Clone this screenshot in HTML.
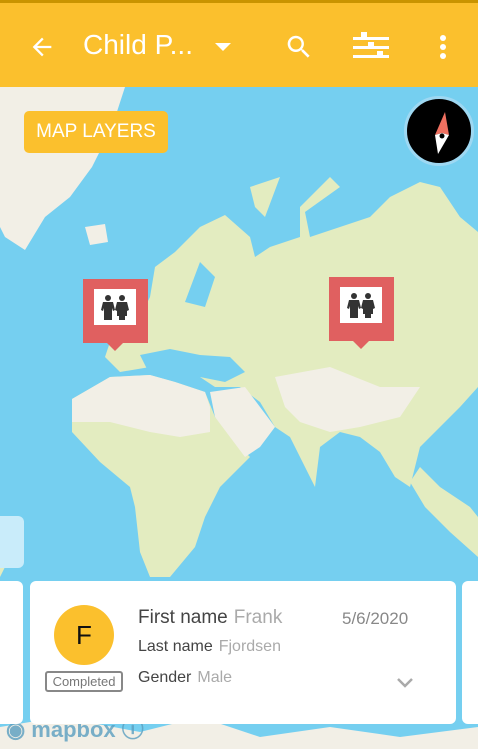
<!DOCTYPE html>
<html><head><style>
*{margin:0;padding:0;box-sizing:border-box}
body{width:478px;height:749px;overflow:hidden;position:relative;font-family:"Liberation Sans",sans-serif;background:#75cff0}
.top{position:absolute;left:0;top:0;width:478px;height:87px;background:#fbc02d;border-top:3px solid #c99400}
.title{position:absolute;left:83px;top:26px;color:#fff;font-size:28px}
.ml{position:absolute;left:24px;top:111px;width:144px;height:42px;background:#fbc02d;border-radius:5px;color:#fff;font-size:19px;line-height:42px;text-align:center}
.comp{position:absolute;left:404px;top:96px;width:70px;height:70px;border-radius:50%;background:#000;border:3px solid #9ed8f2}
.mk{position:absolute;width:65px;height:64px;background:#e06060}
.mk .in{position:absolute;left:11px;top:10px;width:42px;height:36px;background:#fff}
.mk:after{content:"";position:absolute;left:24px;bottom:-8px;border-left:8px solid transparent;border-right:8px solid transparent;border-top:8px solid #e06060}
.card{position:absolute;top:581px;height:143px;background:#fff;border-radius:6px}
.lbl{position:absolute;color:#444;font-size:18px}
.lbl span{color:#aaa;margin-left:6px}
</style></head><body>
<svg style="position:absolute;left:0;top:87px" width="478" height="662">
<path fill="#f2efe6" d="M0 0H125L112 40 92 80 70 110 45 130 25 163 5 150 0 140Z"/>
<path fill="#e3ecc0" d="M155 180 175 165 200 140 225 128 250 150 255 170 270 160 300 150 300 120 330 90 340 100 305 125 310 150 340 140 370 130 390 110 420 95 440 100 460 130 478 145V300L460 320 440 340 420 360 410 400 395 390 380 365 360 350 340 345 320 360 315 400 305 380 290 350 275 340 260 315 240 300 215 300 200 290 180 275 160 270 150 280 120 285 105 270 110 255 140 230 150 210Z"/>
<path fill="#75cff0" d="M140 268 170 262 200 268 230 270 245 285 225 295 200 290 175 290 150 288Z"/>
<path fill="#75cff0" d="M185 215 200 175 215 190 205 220Z"/>
<path fill="#e3ecc0" d="M72 312 110 290 150 288 175 295 205 305 215 330 240 360 250 370 235 385 220 400 205 430 195 460 170 490 150 490 140 465 135 420 130 400 100 375 72 345Z"/>
<path fill="#f2efe6" d="M72 312 110 290 150 288 175 295 205 305 210 320 210 345 180 350 150 345 110 335 72 335Z"/>
<path fill="#f2efe6" d="M210 305 245 300 275 340 260 360 245 370 230 350 215 330Z"/>
<path fill="#f2efe6" d="M275 290 330 280 380 300 420 300 400 330 360 340 330 345 300 335 285 320Z"/>
<path fill="#e3ecc0" d="M255 120 250 100 280 90 265 130Z"/>
<path fill="#f2efe6" d="M85 140 105 137 108 155 90 158Z"/>
<path fill="#e3ecc0" d="M420 380 440 400 470 420 478 430V470L450 445 425 420 410 395Z"/>
<path fill="#e3ecc0" d="M0 460 10 470 0 490Z"/>
<path fill="#f2efe6" d="M0 640 60 630 140 645 200 630 260 650 330 640 400 650 478 640V662H0Z"/>
</svg>
<div class="top">
<svg style="position:absolute;left:28px;top:30px" width="28" height="28" viewBox="0 0 24 24"><path d="M20 11H7.8l5.6-5.6L12 4l-8 8 8 8 1.4-1.4L7.8 13H20z" fill="#fff"/></svg>
<div class="title">Child P...</div>
<svg style="position:absolute;left:215px;top:40px" width="16" height="10"><path d="M0 0h16L8 8z" fill="#fff"/></svg>
<svg style="position:absolute;left:284px;top:29px" width="30" height="30" viewBox="0 0 24 24"><path d="M15.5 14h-.8l-.3-.3A6.5 6.5 0 1 0 9.5 16a6.5 6.5 0 0 0 4.2-1.6l.3.3v.8l5 5 1.5-1.5zm-6 0A4.5 4.5 0 1 1 14 9.5 4.5 4.5 0 0 1 9.5 14z" fill="#fff"/></svg>
<svg style="position:absolute;left:353px;top:28px" width="38" height="30"><g fill="#fff"><rect x="0" y="6" width="36" height="3"/><rect x="8" y="1" width="6" height="7"/><rect x="0" y="15" width="36" height="3"/><rect x="15" y="11" width="6" height="7"/><rect x="0" y="24" width="36" height="3"/><rect x="24" y="20" width="6" height="7"/></g></svg>
<svg style="position:absolute;left:438px;top:30px" width="10" height="28"><g fill="#fff"><circle cx="5" cy="5" r="3"/><circle cx="5" cy="14" r="3"/><circle cx="5" cy="23" r="3"/></g></svg>
</div>
<div class="ml">MAP LAYERS</div>
<div class="comp"><svg width="64" height="64"><path d="M38 13 42 36 35 34 28 36Z" fill="#ef7060"/><path d="M28 36 35 34 42 36 31 55Z" fill="#fff"/><circle cx="35" cy="37" r="2.5" fill="#000"/></svg></div>
<div class="mk" style="left:83px;top:279px"><div class="in"><svg width="42" height="36"><g fill="#333"><circle cx="14" cy="9" r="3"/><path d="M9 13h10l2 8-2 1-1-3v12h-8V19l-1 3-2-1z"/><circle cx="28" cy="9" r="3"/><path d="M23 13h10l2 8-2 1v5h-2v4h-6v-4h-2v-5l-2-1z"/></g></svg></div></div>
<div class="mk" style="left:329px;top:277px"><div class="in"><svg width="42" height="36"><g fill="#333"><circle cx="14" cy="9" r="3"/><path d="M9 13h10l2 8-2 1-1-3v12h-8V19l-1 3-2-1z"/><circle cx="28" cy="9" r="3"/><path d="M23 13h10l2 8-2 1v5h-2v4h-6v-4h-2v-5l-2-1z"/></g></svg></div></div>
<div style="position:absolute;left:-10px;top:516px;width:34px;height:52px;background:#c9ecfa;border-radius:6px"></div>
<div style="position:absolute;left:6px;top:712px;color:#5a9fc0;font-size:22px;font-weight:bold;opacity:.8">◉ mapbox ⓘ</div>
<div class="card" style="left:-10px;width:33px"></div>
<div class="card" style="left:462px;width:30px"></div>
<div class="card" style="left:30px;width:426px">
<div style="position:absolute;left:24px;top:24px;width:60px;height:60px;border-radius:50%;background:#fbc02d;font-size:26px;line-height:60px;text-align:center;color:#111">F</div>
<div style="position:absolute;left:15px;top:90px;width:78px;height:21px;border:2px solid #888;border-radius:3px;font-size:13px;color:#777;text-align:center;line-height:17px">Completed</div>
<div class="lbl" style="left:108px;top:26px;font-size:19px">First name<span>Frank</span></div>
<div style="position:absolute;left:312px;top:28px;font-size:17px;color:#888">5/6/2020</div>
<div class="lbl" style="left:108px;top:57px;font-size:16px">Last name<span>Fjordsen</span></div>
<div class="lbl" style="left:108px;top:88px;font-size:16px">Gender<span>Male</span></div>
<svg style="position:absolute;left:366px;top:96px" width="18" height="12"><path d="M2 2l7 7 7-7" stroke="#aaa" stroke-width="2.5" fill="none"/></svg>
</div>
</body></html>
